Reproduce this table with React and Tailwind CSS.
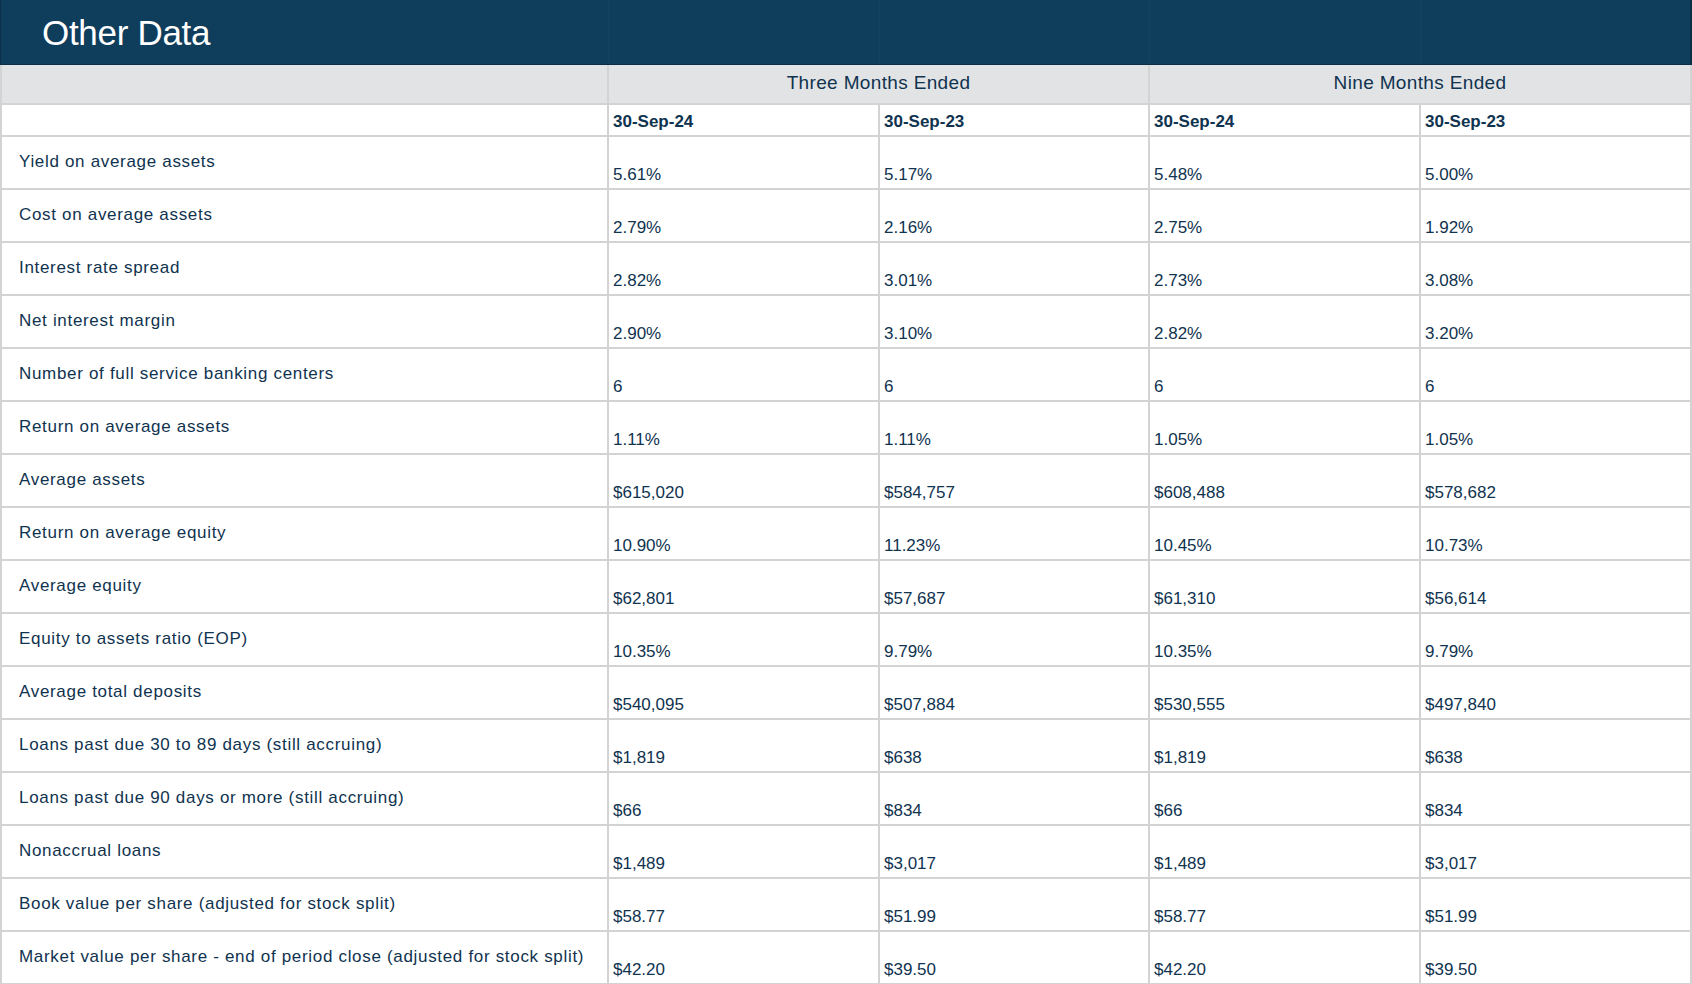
const rows = [
  ["Yield on average assets", "5.61%", "5.17%", "5.48%", "5.00%"],
  ["Cost on average assets", "2.79%", "2.16%", "2.75%", "1.92%"],
  ["Interest rate spread", "2.82%", "3.01%", "2.73%", "3.08%"],
  ["Net interest margin", "2.90%", "3.10%", "2.82%", "3.20%"],
  ["Number of full service banking centers", "6", "6", "6", "6"],
  ["Return on average assets", "1.11%", "1.11%", "1.05%", "1.05%"],
  ["Average assets", "$615,020", "$584,757", "$608,488", "$578,682"],
  ["Return on average equity", "10.90%", "11.23%", "10.45%", "10.73%"],
  ["Average equity", "$62,801", "$57,687", "$61,310", "$56,614"],
  ["Equity to assets ratio (EOP)", "10.35%", "9.79%", "10.35%", "9.79%"],
  ["Average total deposits", "$540,095", "$507,884", "$530,555", "$497,840"],
  ["Loans past due 30 to 89 days (still accruing)", "$1,819", "$638", "$1,819", "$638"],
  ["Loans past due 90 days or more (still accruing)", "$66", "$834", "$66", "$834"],
  ["Nonaccrual loans", "$1,489", "$3,017", "$1,489", "$3,017"],
  ["Book value per share (adjusted for stock split)", "$58.77", "$51.99", "$58.77", "$51.99"],
  ["Market value per share - end of period close (adjusted for stock split)", "$42.20", "$39.50", "$42.20", "$39.50"],
]

const dates = ["30-Sep-24", "30-Sep-23", "30-Sep-24", "30-Sep-23"]

export default function App() {
  return (
    <div className="w-[1692px] h-[984px] overflow-hidden bg-white text-[#10334f]" style={{ fontFamily: '"Liberation Sans", Arial, sans-serif' }}>
      {/* Title bar */}
      <div className="h-[65px] bg-[#0f3d5c] border-b border-[#0a2e47] grid grid-cols-[609px_271px_270px_271px_1fr]">
        <div className="flex items-center pl-[41px] border-r border-[#124362] border-l border-l-[#0b3049]">
          <h1 className="text-white text-[35px] leading-none tracking-[-0.3px] whitespace-nowrap">Other Data</h1>
        </div>
        <div className="border-r border-[#124362]" />
        <div className="border-r border-[#124362]" />
        <div className="border-r border-[#124362]" />
        <div className="border-r-2 border-[#0b3049]" />
      </div>

      <div className="border-x-2 border-[#d3d3d3]">
        {/* Period group row */}
        <div className="h-[40px] bg-[#e2e3e5] border-b-2 border-[#d3d3d3] grid grid-cols-[607px_541px_1fr]">
          <div className="border-r-2 border-[#d3d3d3]" />
          <div className="border-r-2 border-[#d3d3d3] flex items-center justify-center pb-[2px] text-[19px] tracking-[0.35px]">Three Months Ended</div>
          <div className="flex items-center justify-center pb-[2px] text-[19px] tracking-[0.35px]">Nine Months Ended</div>
        </div>

        {/* Dates row */}
        <div className="h-[32px] border-b-2 border-[#d3d3d3] grid grid-cols-[607px_271px_270px_271px_1fr]">
          <div className="border-r-2 border-[#d3d3d3]" />
          {dates.map((d, i) => (
            <div key={i} className={`flex items-center pl-[4px] pt-[3px] font-bold text-[17px] ${i < 3 ? "border-r-2 border-[#d3d3d3]" : ""}`}>{d}</div>
          ))}
        </div>

        {/* Data rows */}
        {rows.map((r, idx) => (
          <div key={idx} className="h-[53px] border-b-2 border-[#d3d3d3] grid grid-cols-[607px_271px_270px_271px_1fr]">
            <div className="border-r-2 border-[#d3d3d3] pl-[17px] pt-[15px] text-[17px] leading-[20px] tracking-[0.68px] whitespace-nowrap">{r[0]}</div>
            {r.slice(1).map((v, i) => (
              <div key={i} className={`flex items-end pl-[4px] pb-[3px] text-[17px] leading-[20px] ${i < 3 ? "border-r-2 border-[#d3d3d3]" : ""}`}>{v}</div>
            ))}
          </div>
        ))}
      </div>
    </div>
  )
}
